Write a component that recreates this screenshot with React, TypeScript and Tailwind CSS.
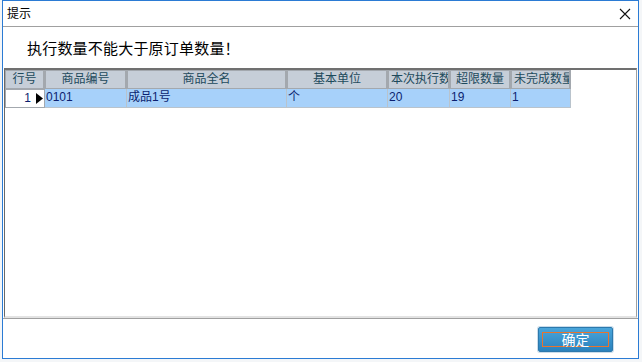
const columns = [
  { label: "行号", w: "w-[40px]", align: "justify-center" },
  { label: "商品编号", w: "w-[82px]", align: "justify-center" },
  { label: "商品全名", w: "w-[160px]", align: "justify-center" },
  { label: "基本单位", w: "w-[101px]", align: "justify-center" },
  { label: "本次执行数量", w: "w-[62px]", align: "justify-start pl-[2px]" },
  { label: "超限数量", w: "w-[61px]", align: "justify-center" },
  { label: "未完成数量", w: "w-[60px]", align: "justify-start pl-[2px]" },
];

const row = ["0101", "成品1号", "个", "20", "19", "1"];

const CloseIcon = () => (
  <svg width="12" height="12" viewBox="0 0 12 12" className="block">
    <path d="M1 1 L11 11 M11 1 L1 11" stroke="#111" strokeWidth="1.1" />
  </svg>
);

export default function App() {
  const font = "font-['Liberation_Sans','Noto_Sans_CJK_SC',sans-serif]";
  return (
    <div className={`relative h-[362px] w-[642px] overflow-hidden bg-[#f4f6f8] ${font}`}>
      <div className="ml-[2px] flex h-[359px] w-[637px] flex-col border border-[#2b7bd4] bg-white">
        {/* title bar */}
        <div className="flex h-[26px] shrink-0 items-center justify-between border-b border-[#a0a0a0] pl-[4px] pr-[7px]">
          <span className="text-[12px] leading-none text-black">提示</span>
          <CloseIcon />
        </div>

        {/* message */}
        <div className="flex h-[41px] shrink-0 items-center pl-[24px] pt-[2px]">
          <span className="text-[15px] leading-none tracking-[0.2px] text-black">
            执行数量不能大于原订单数量！
          </span>
        </div>

        {/* grid */}
        <div className="mx-[1px] h-[250px] shrink-0 border-b-2 border-l border-r border-t-2 border-b-[#e3e3e3] border-l-[#696969] border-r-[#a0a0a0] border-t-[#707070] bg-white">
          <div className="flex h-[19px] text-[12px] leading-[17px] text-[#1d4a5c]">
            {columns.map((c) => (
              <div
                key={c.label}
                className={`flex ${c.w} shrink-0 overflow-hidden whitespace-nowrap border border-r-2 border-[#a3a8ae] bg-[#c6ced8] ${c.align}`}
              >
                {c.label}
              </div>
            ))}
          </div>
          <div className="flex h-[19px] text-[12px] leading-[17px] text-[#0c1f70]">
            <div className="flex w-[40px] shrink-0 items-center justify-end gap-[5px] border border-[#a3a8ae] bg-white pr-[1px]">
              <span>1</span>
              <svg width="7" height="11" viewBox="0 0 7 11" className="block">
                <path d="M0 0 L7 5.5 L0 11 Z" fill="#000" />
              </svg>
            </div>
            {row.map((v, i) => (
              <div
                key={i}
                className={`${columns[i + 1].w} shrink-0 overflow-hidden whitespace-nowrap border-b border-r border-[#b9c3cc] bg-[#a7d1fa] pl-[1px]`}
              >
                {v}
              </div>
            ))}
          </div>
        </div>

        {/* bottom bar */}
        <div className="flex h-[40px] shrink-0 justify-end border-t border-[#a0a0a0] pr-[25px] pt-[8px]">
          <button className="flex h-[25px] w-[75px] rounded-[2px] border border-[#2c79ad] bg-gradient-to-b from-[#4aa5da] to-[#2a82bd] px-[3px] py-[4px] shadow-[0_0_0_1px_#c9dceb]">
            <span className="flex flex-1 items-center justify-center border border-[#e8742e] text-[14px] leading-none text-white">
              确定
            </span>
          </button>
        </div>
      </div>
    </div>
  );
}
